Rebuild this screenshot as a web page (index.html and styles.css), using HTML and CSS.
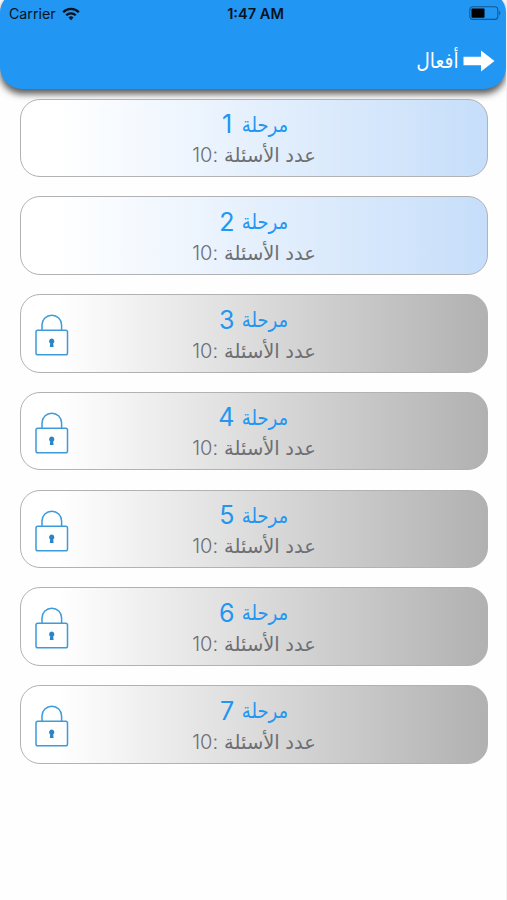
FILE: index.html
```html
<!DOCTYPE html>
<html lang="ar" dir="rtl">
<head>
    <meta charset="UTF-8">
    <meta name="viewport" content="width=device-width, initial-scale=1.0">
    <title>أفعال</title>
    <link rel="stylesheet" href="styles.css">
</head>
<body>

<svg class="sprite">
    <symbol id="lock" viewBox="0 0 34 42">
        <g fill="none" stroke="#3d9bdc" stroke-width="1.5">
            <rect x="1" y="16.2" width="31.5" height="24.5" rx="1.8"/>
            <path d="M7 16V11a9.8 9.8 0 0 1 19.6 0v5"/>
        </g>
        <path d="M16.7 24.5a2.7 2.7 0 0 1 1.5 4.9l.4 3.6h-3.8l.4-3.6a2.7 2.7 0 0 1 1.5-4.9z" fill="#2b84c6"/>
    </symbol>
</svg>

<header class="header">
    <div class="status" dir="ltr">
        <div class="carrier">
            <span>Carrier</span>
            <svg width="18" height="14" viewBox="0 0 18 14">
                <g fill="none" stroke="#07121c" stroke-width="2.3">
                    <path d="M1.2 5.2a11 11 0 0 1 15.6 0"/>
                    <path d="M4.2 8.3a6.8 6.8 0 0 1 9.6 0"/>
                </g>
                <path d="M9 13.2l-2.5-2.7a3.5 3.5 0 0 1 5 0z" fill="#07121c"/>
            </svg>
        </div>
        <div class="time">1:47 AM</div>
        <div class="battery">
            <svg width="33" height="15" viewBox="0 0 33 15">
                <rect x=".8" y=".8" width="28" height="12.6" rx="3" fill="none" stroke="#12588f" stroke-width="1.1"/>
                <rect x="2.5" y="2.5" width="13" height="9.3" rx=".8" fill="#000"/>
                <path d="M30.2 4.8q2.4 2.2 0 4.6z" fill="#12588f"/>
            </svg>
        </div>
    </div>
    <div class="title">
        <svg width="32" height="22" viewBox="0 0 32 22">
            <path d="M.5 6.8H18V.5L31.5 11 18 21.5v-6.3H.5z" fill="#fff"/>
        </svg>
        <h1>أفعال</h1>
    </div>
</header>

<main class="levels">
    <div class="level">
        <h2><span>مرحلة</span><b>1</b></h2>
        <p><span>عدد الأسئلة</span><b>:10</b></p>
    </div>
    <div class="level">
        <h2><span>مرحلة</span><b>2</b></h2>
        <p><span>عدد الأسئلة</span><b>:10</b></p>
    </div>
    <div class="level locked">
        <h2><span>مرحلة</span><b>3</b></h2>
        <p><span>عدد الأسئلة</span><b>:10</b></p>
        <svg class="lock"><use href="#lock"/></svg>
    </div>
    <div class="level locked">
        <h2><span>مرحلة</span><b>4</b></h2>
        <p><span>عدد الأسئلة</span><b>:10</b></p>
        <svg class="lock"><use href="#lock"/></svg>
    </div>
    <div class="level locked">
        <h2><span>مرحلة</span><b>5</b></h2>
        <p><span>عدد الأسئلة</span><b>:10</b></p>
        <svg class="lock"><use href="#lock"/></svg>
    </div>
    <div class="level locked">
        <h2><span>مرحلة</span><b>6</b></h2>
        <p><span>عدد الأسئلة</span><b>:10</b></p>
        <svg class="lock"><use href="#lock"/></svg>
    </div>
    <div class="level locked">
        <h2><span>مرحلة</span><b>7</b></h2>
        <p><span>عدد الأسئلة</span><b>:10</b></p>
        <svg class="lock"><use href="#lock"/></svg>
    </div>
</main>

</body>
</html>
```
FILE: styles.css
```css
* {
    box-sizing: border-box;
}

body {
    display: flow-root;
    margin: 0;
    height: 900px;
    overflow: hidden;
    border-right: 1px solid #f0f0f0;
    background: #fefefe;
    font-family: Inter, "DejaVu Sans", sans-serif;
}

.sprite {
    display: none;
}

.header {
    height: 98px;
    margin: -9px 0 0;
    padding-top: 9px;
    border-radius: 22px;
    background: #2296f3;
    box-shadow: 0 5px 7px rgba(0, 0, 0, .65);
}

.status {
    display: grid;
    grid-template-columns: 1fr auto 1fr;
    align-items: center;
    height: 27px;
    padding: 0 4px 0 9px;
    color: #07121c;
    font-size: 14.2px;
}

.carrier {
    display: flex;
    align-items: center;
    gap: 6px;
}

.time {
    font-size: 14.6px;
    font-weight: 600;
    color: #06121c;
}

.battery {
    display: flex;
    justify-content: flex-end;
}

.title {
    display: flex;
    align-items: center;
    gap: 4px;
    height: 67px;
    padding-right: 11px;
}

.title h1 {
    margin: 0;
    color: #fff;
    font-size: 21px;
    font-weight: 400;
    transform: scaleX(.89);
    transform-origin: right;
}

.levels {
    display: flex;
    flex-direction: column;
    gap: 19.3px;
    padding: 9.5px 18px 0 20px;
}

.level {
    display: grid;
    grid-template-columns: 1fr;
    grid-template-rows: 31px 31px;
    align-content: start;
    height: 78.5px;
    padding-top: 9px;
    border: 1px solid #b0b2b4;
    border-radius: 20px;
    background: linear-gradient(to right, #fff 8%, #c6defa);
}

.level.locked {
    background: linear-gradient(to right, #fff 8%, #b1b1b1);
}

.level h2,
.level p {
    grid-column: 1;
    display: flex;
    align-items: center;
    justify-content: center;
    margin: 0;
    font-weight: 400;
}

.level h2 {
    grid-row: 1;
    gap: 8px;
    color: #2196f3;
    font-size: 21px;
}

.level h2 span {
    margin: 0 -4px;
    transform: scaleX(.86);
}

.level p {
    grid-row: 2;
    gap: 6px;
    color: #6d6f72;
    font-size: 19.5px;
}

.level b {
    font-weight: 400;
}

.level h2 b {
    width: 15px;
    text-align: center;
    font-size: 25px;
}

.level p b {
    font-size: 20px;
    font-weight: 300;
}

.lock {
    grid-column: 1;
    grid-row: 1 / 3;
    justify-self: end;
    width: 34px;
    height: 42px;
    margin: 10px 0 0 14px;
}
```
